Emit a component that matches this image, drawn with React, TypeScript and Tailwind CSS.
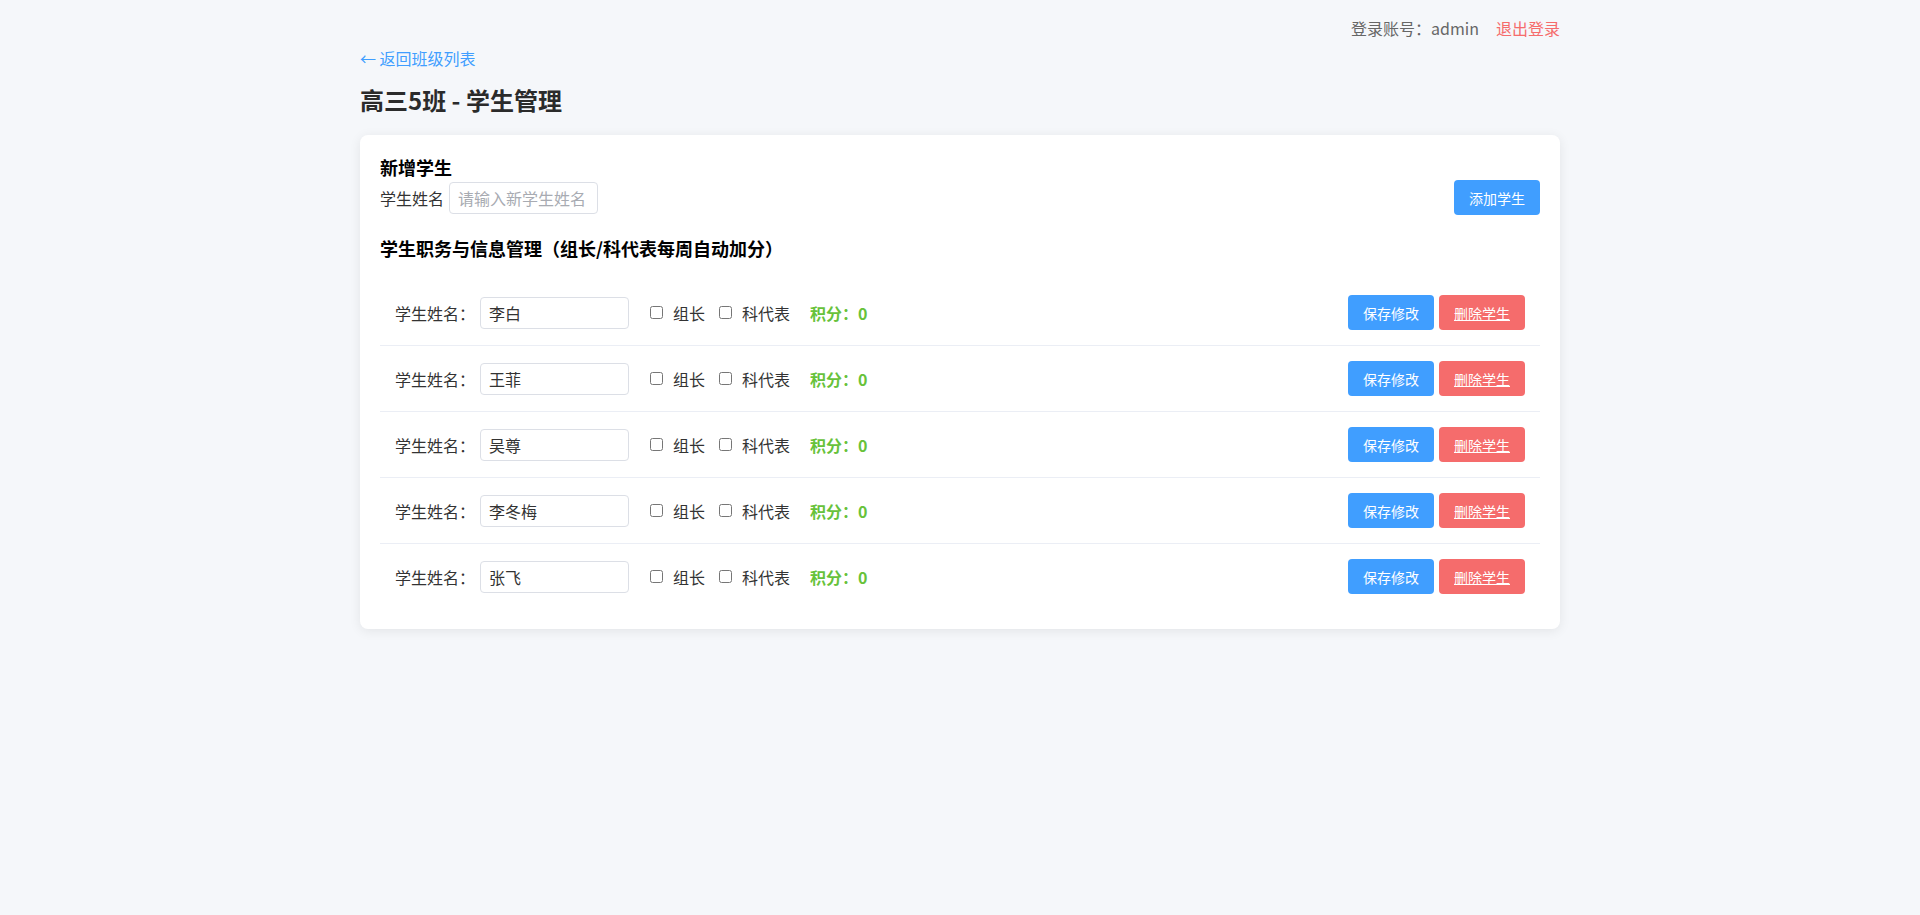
const students = ["李白", "王菲", "吴尊", "李冬梅", "张飞"];

function StudentRow({ name, last }: { name: string; last: boolean }) {
  return (
    <div
      className={`flex items-center justify-between px-[15px] py-[15px] ${
        last ? "" : "border-b border-[#ebeef5]"
      }`}
    >
      <div className="flex items-center text-base text-[#333]">
        <span className="w-20 mr-[5px] leading-6">学生姓名：</span>
        <input
          defaultValue={name}
          className="w-[149px] h-8 px-2 mr-[21px] border border-[#dcdfe6] rounded-[4px] bg-white text-base text-[#333] outline-none"
        />
        <label className="flex items-center leading-6">
          <input type="checkbox" className="m-0 w-[13px] h-[13px]" />
          <span className="ml-[10px]">组长</span>
        </label>
        <label className="flex items-center ml-[14px] leading-6">
          <input type="checkbox" className="m-0 w-[13px] h-[13px]" />
          <span className="ml-[10px]">科代表</span>
        </label>
        <span className="ml-[20px] font-bold text-[#67c23a] leading-6">积分：0</span>
      </div>
      <div className="flex items-center gap-[5px]">
        <button className="h-[35px] px-[15px] rounded-[4px] bg-[#409eff] text-white text-sm">
          保存修改
        </button>
        <button className="h-[35px] px-[15px] rounded-[4px] bg-[#f56c6c] text-white text-sm underline">
          删除学生
        </button>
      </div>
    </div>
  );
}

export default function App() {
  return (
    <div
      className="min-h-screen bg-[#f5f7fa]"
      style={{ fontFamily: '"Noto Sans CJK SC", "Noto Sans", sans-serif' }}
    >
      <div className="max-w-[1200px] mx-auto">
        {/* top bar */}
        <div className="flex justify-end pt-4 text-base leading-6">
          <span className="text-[#666]">登录账号：admin</span>
          <a href="#" className="ml-[17px] text-[#f56c6c]">
            退出登录
          </a>
        </div>

        <a href="#" className="block mt-[6px] text-base leading-6 text-[#409eff]">
          ← 返回班级列表
        </a>

        <h1 className="mt-3 text-2xl leading-9 font-bold text-[#2b2b2b]">
          高三5班 - 学生管理
        </h1>

        {/* card */}
        <div className="mt-[17px] bg-white rounded-lg shadow-[0_2px_12px_rgba(0,0,0,0.08)] p-5">
          <h3 className="text-lg leading-[25px] font-bold text-black">新增学生</h3>
          <div className="flex items-center justify-between h-[35px]">
            <div className="flex items-center">
              <span className="mr-[5px] text-base text-[#333] leading-6">学生姓名</span>
              <input
                placeholder="请输入新学生姓名"
                className="w-[149px] h-8 px-2 border border-[#dcdfe6] rounded-[4px] text-base text-[#333] placeholder:text-[#a8abb2] outline-none"
              />
            </div>
            <button className="h-[35px] px-[15px] rounded-[4px] bg-[#409eff] text-white text-sm">
              添加学生
            </button>
          </div>

          <h3 className="mt-5 mb-[18px] text-lg leading-[27px] font-bold text-black">
            学生职务与信息管理（组长/科代表每周自动加分）
          </h3>

          <div>
            {students.map((s, i) => (
              <StudentRow key={s} name={s} last={i === students.length - 1} />
            ))}
          </div>
        </div>
      </div>
    </div>
  );
}
